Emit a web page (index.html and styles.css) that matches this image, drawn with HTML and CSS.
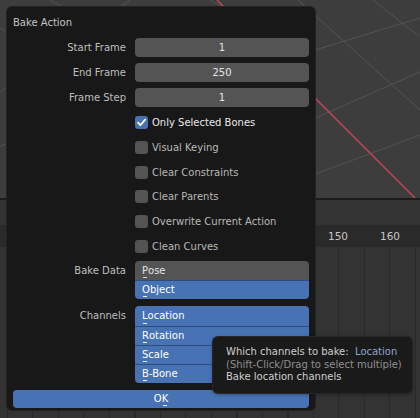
FILE: index.html
```html
<!DOCTYPE html>
<html>
<head>
<meta charset="utf-8">
<link rel="stylesheet" href="styles.css">
</head>
<body>
<div class="app">
  <div class="viewport">
    <svg class="grid" width="420" height="198" viewBox="0 0 420 198">
      <line x1="298" y1="0" x2="420" y2="110" class="gl"/>
      <line x1="373" y1="0" x2="420" y2="37" class="gl"/>
      <line x1="0" y1="146" x2="420" y2="18" class="gl"/>
      <line x1="133" y1="198" x2="420" y2="72" class="gl"/>
      <line x1="200" y1="217" x2="420" y2="135" class="gl"/>
      <line x1="50" y1="0" x2="200" y2="85" class="gl"/>
      <line x1="210" y1="0" x2="280" y2="38" class="gl"/>
      <line x1="0" y1="92" x2="130" y2="0" class="gl"/>
      <line x1="0" y1="28" x2="40" y2="48" class="gl"/>
      <line x1="217" y1="0" x2="415" y2="198" class="axis"/>
    </svg>
  </div>
  <div class="sep"></div>
  <div class="tl-header"></div>
  <div class="tl-ruler">
    <span class="frame" style="left:338px">150</span>
    <span class="frame" style="left:390px">160</span>
  </div>
  <div class="tl-body"></div>

  <div class="panel">
    <div class="title">Bake Action</div>
    <div class="form">
      <div class="row">
        <div class="label">Start Frame</div>
        <div class="field">1</div>
      </div>
      <div class="row">
        <div class="label">End Frame</div>
        <div class="field">250</div>
      </div>
      <div class="row">
        <div class="label">Frame Step</div>
        <div class="field">1</div>
      </div>
      <div class="checks">
        <div class="row">
          <div></div>
          <div class="check on"><span class="box"><svg width="13" height="13" viewBox="0 0 13 13"><polyline points="3,6.6 5.4,9.1 10.2,3.6" fill="none" stroke="#fff" stroke-width="1.7" stroke-linecap="round" stroke-linejoin="round"/></svg></span><span class="ctext">Only Selected Bones</span></div>
        </div>
        <div class="row">
          <div></div>
          <div class="check"><span class="box"></span><span class="ctext">Visual Keying</span></div>
        </div>
        <div class="row">
          <div></div>
          <div class="check"><span class="box"></span><span class="ctext">Clear Constraints</span></div>
        </div>
        <div class="row">
          <div></div>
          <div class="check"><span class="box"></span><span class="ctext">Clear Parents</span></div>
        </div>
        <div class="row">
          <div></div>
          <div class="check"><span class="box"></span><span class="ctext">Overwrite Current Action</span></div>
        </div>
        <div class="row">
          <div></div>
          <div class="check"><span class="box"></span><span class="ctext">Clean Curves</span></div>
        </div>
      </div>
      <div class="row top gap-data">
        <div class="label">Bake Data</div>
        <div class="enum">
          <div class="item"><span class="u">P</span>ose</div>
          <div class="item sel"><span class="u">O</span>bject</div>
        </div>
      </div>
      <div class="row top gap-chan">
        <div class="label">Channels</div>
        <div class="enum">
          <div class="item sel c"><span class="u">L</span>ocation</div>
          <div class="item sel c"><span class="u">R</span>otation</div>
          <div class="item sel c"><span class="u">S</span>cale</div>
          <div class="item sel c"><span class="u">B</span>-Bone</div>
        </div>
      </div>
      <div class="ok">O<span class="u">K</span></div>
    </div>
  </div>

  <div class="tooltip">
    <div class="tline">Which channels to bake:&nbsp; <span class="val">Location</span></div>
    <div class="tline dim">(Shift-Click/Drag to select multiple)</div>
    <div class="tline">Bake location channels</div>
  </div>
</div>
</body>
</html>
```
FILE: styles.css
```css
html, body {
  margin: 0;
  padding: 0;
  background: #333333;
}

.app {
  position: relative;
  width: 420px;
  height: 418px;
  overflow: hidden;
  font-family: "DejaVu Sans", sans-serif;
  font-size: 10px;
}

.viewport {
  height: 198px;
  background: #3d3d3d;
}

.grid {
  display: block;
}

.gl {
  stroke: #545454;
  stroke-width: 1;
}

.axis {
  stroke: #c2435a;
  stroke-width: 1.5;
}

.sep {
  height: 2px;
  background: #1b1b1b;
}

.tl-header {
  height: 25px;
  background: #333333;
}

.tl-ruler {
  position: relative;
  height: 22px;
  background: #2a2a2a;
}

.frame {
  position: absolute;
  top: 0;
  line-height: 22px;
  transform: translateX(-50%);
  color: #c6c6c6;
  font-size: 10.5px;
}

.tl-body {
  height: 171px;
  background-color: #333333;
  background-image: repeating-linear-gradient(to right,
    transparent 0, transparent 7px,
    #292929 7px, #292929 8px,
    transparent 8px, transparent 25.5px);
}

/* Operator popup */
.panel {
  position: absolute;
  left: 7px;
  top: 7px;
  width: 308px;
  height: 403px;
  box-sizing: border-box;
  padding: 0 6px;
  background: #181818;
  border-radius: 5px;
  box-shadow: 0 0 0 1px #232323;
  color: #c4c4c4;
}

.title {
  padding-top: 10px;
  height: 12px;
  line-height: 12px;
  margin-bottom: 9px;
  color: #c4c4c4;
}

.form {
  display: flex;
  flex-direction: column;
  gap: 6px;
}

.checks {
  display: flex;
  flex-direction: column;
  gap: 5.75px;
}

.row {
  display: grid;
  grid-template-columns: 113px 174px;
  column-gap: 9px;
  align-items: center;
  height: 19px;
}

.row.top {
  align-items: start;
  height: auto;
}

.gap-data {
  margin-top: -0.5px;
}

.gap-chan {
  margin-top: 1px;
}

.label {
  text-align: right;
  line-height: 19px;
  color: #bfbfbf;
  white-space: nowrap;
}

.field {
  height: 19px;
  line-height: 19px;
  background: #545454;
  border-radius: 4px;
  text-align: center;
  color: #e4e4e4;
}

.check {
  display: flex;
  align-items: center;
  gap: 4px;
  height: 19px;
}

.box {
  width: 13px;
  height: 13px;
  border-radius: 3px;
  background: #545454;
  flex: none;
  display: block;
}

.box svg {
  display: block;
}

.check.on .box {
  background: #4772b3;
}

.ctext {
  color: #b8b8b8;
  white-space: nowrap;
}

.check.on .ctext {
  color: #e8e8e8;
}

.enum {
  display: flex;
  flex-direction: column;
}

.item {
  height: 19px;
  line-height: 19px;
  padding-left: 7px;
  background: #545454;
  color: #e2e2e2;
}

.item.c {
  height: 19.25px;
  line-height: 19.25px;
}

.item:first-child {
  border-radius: 4px 4px 0 0;
}

.item:last-child {
  border-radius: 0 0 4px 4px;
}

.item + .item {
  box-shadow: inset 0 1px 0 rgba(0, 0, 0, 0.32);
}

.item.sel {
  background: #4772b3;
  color: #ffffff;
}

.u {
  position: relative;
  display: inline-block;
}

.u::after {
  content: "";
  position: absolute;
  left: 1px;
  bottom: 2px;
  width: 4px;
  height: 1px;
  background: currentColor;
  opacity: 0.9;
}

.ok {
  margin-top: 1px;
  height: 18px;
  line-height: 18px;
  background: #4772b3;
  border-radius: 4px;
  text-align: center;
  color: #ffffff;
}

/* Tooltip */
.tooltip {
  position: absolute;
  left: 213px;
  top: 337px;
  width: 199px;
  height: 56px;
  box-sizing: border-box;
  padding: 9px 0 0 13px;
  background: #1a1a1a;
  border-radius: 5px;
  box-shadow: 0 0 0 1px #262626, 0 1px 4px rgba(0, 0, 0, 0.4);
  color: #cfcfcf;
}

.tline {
  height: 12.5px;
  line-height: 12.5px;
  white-space: nowrap;
}

.tline .val {
  color: #8da3cc;
}

.tline.dim {
  color: #8e8e8e;
}
```
